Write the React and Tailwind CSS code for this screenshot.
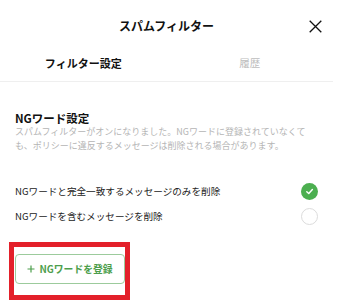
import React from "react";

const font = { fontFamily: '"Noto Sans CJK JP", "Noto Sans", sans-serif' };

function Check() {
  return (
    <div className="w-[17px] h-[17px] rounded-full bg-[#4caf50] flex items-center justify-center">
      <svg width="9" height="9" viewBox="0 0 10 10" fill="none">
        <path d="M2 5.2 L4.2 7.3 L8.2 2.8" stroke="#fff" strokeWidth="1.6" strokeLinecap="round" strokeLinejoin="round" />
      </svg>
    </div>
  );
}

function Empty() {
  return <div className="w-[17px] h-[17px] rounded-full border border-[#dcdcdc] bg-white" />;
}

export default function App() {
  return (
    <div className="w-[340px] h-[302px] bg-white overflow-hidden" style={font}>
      <div className="w-[333px]">
        <div className="relative h-[52px] flex items-center justify-center">
          <span className="text-[12px] font-bold text-[#111] leading-none">スパムフィルター</span>
          <svg className="absolute left-[309px] top-[20px]" width="13" height="13" viewBox="0 0 13 13">
            <path d="M0.7 0.7 L12.3 12.3 M12.3 0.7 L0.7 12.3" stroke="#111" strokeWidth="1.3" />
          </svg>
        </div>
        <div className="h-[30px] border-b border-[#efefef] flex items-start">
          <div className="flex-1 h-[22px] flex items-center justify-center text-[11px] font-bold text-[#111]">フィルター設定</div>
          <div className="flex-1 h-[22px] flex items-center justify-center text-[10.5px] text-[#bdbdbd]">履歴</div>
        </div>
        <div className="px-[15px] pt-[29px]">
          <div className="text-[11.5px] leading-[14px] font-bold text-[#111]">NGワード設定</div>
          <div className="text-[9px] leading-[14px] text-[#b5b5b5]">
            スパムフィルターがオンになりました。NGワードに登録されていなくても、ポリシーに違反するメッセージは削除される場合があります。
          </div>
          <div className="mt-[26px]">
            <div className="h-[25px] flex items-center justify-between">
              <span className="text-[9.6px] text-[#222]">NGワードと完全一致するメッセージのみを削除</span>
              <Check />
            </div>
            <div className="h-[25px] flex items-center justify-between">
              <span className="text-[9.6px] text-[#222]">NGワードを含むメッセージを削除</span>
              <Empty />
            </div>
          </div>
        </div>
        <div className="ml-[9px] mt-[13px] w-[121px] h-[58px] border-[5px] border-[#e3202a] pt-[7px] pl-[1px]">
          <div className="w-[110px] h-[30px] rounded-[4px] border border-[#9ccb9c] flex items-center justify-center gap-[4px] text-[9.8px] font-semibold text-[#4c9e4c]">
            <svg width="8" height="8" viewBox="0 0 8 8">
              <path d="M4 0.5 V7.5 M0.5 4 H7.5" stroke="#4c9e4c" strokeWidth="1.2" />
            </svg>
            <span>NGワードを登録</span>
          </div>
        </div>
      </div>
    </div>
  );
}
